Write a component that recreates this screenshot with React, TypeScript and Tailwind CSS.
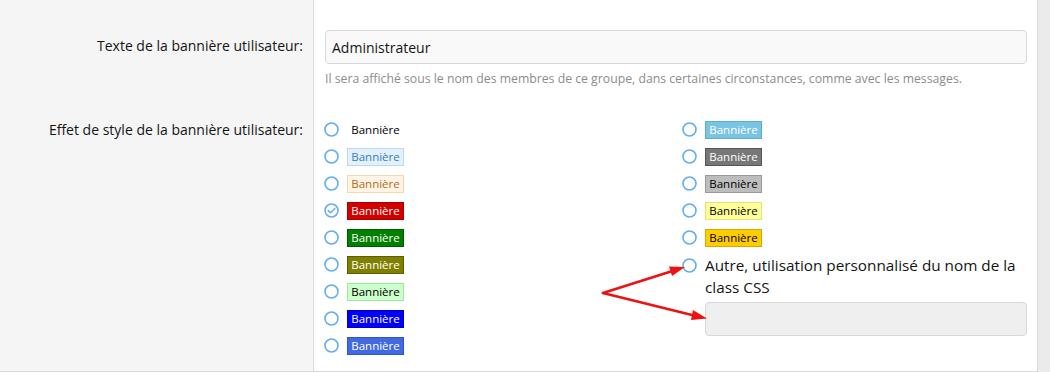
import React from "react";

type B = { bg: string; border: string; text: string };

const leftBadges: (B | null)[] = [
  null,
  { bg: "bg-[#e4f1fc]", border: "border-[#b7daf5]", text: "text-[#2f7fc1]" },
  { bg: "bg-[#fff4e6]", border: "border-[#f6d6aa]", text: "text-[#b06d16]" },
  { bg: "bg-[#d40000]", border: "border-[#a80000]", text: "text-white" },
  { bg: "bg-[#008000]", border: "border-[#005c00]", text: "text-white" },
  { bg: "bg-[#808000]", border: "border-[#5c5c00]", text: "text-white" },
  { bg: "bg-[#ccffcc]", border: "border-[#9be79b]", text: "text-black" },
  { bg: "bg-[#0000ff]", border: "border-[#0000c0]", text: "text-white" },
  { bg: "bg-[#4169e1]", border: "border-[#2f56c9]", text: "text-white" },
];

const rightBadges: B[] = [
  { bg: "bg-[#7ac4e3]", border: "border-[#5aaed2]", text: "text-white" },
  { bg: "bg-[#777777]", border: "border-[#555555]", text: "text-white" },
  { bg: "bg-[#bdbdbd]", border: "border-[#9a9a9a]", text: "text-black" },
  { bg: "bg-[#ffff99]", border: "border-[#e3e37a]", text: "text-black" },
  { bg: "bg-[#ffcc00]", border: "border-[#d6a800]", text: "text-black" },
];

function Radio({ checked = false }: { checked?: boolean }) {
  return (
    <svg width="15" height="15" viewBox="0 0 15 15" className="shrink-0">
      <circle cx="7.5" cy="7.5" r="6.5" fill="white" stroke="#62aef0" strokeWidth="1.6" />
      {checked && (
        <path d="M4.3 7.6 L6.6 9.8 L10.8 5.4" fill="none" stroke="#62aef0" strokeWidth="1.5" strokeLinecap="round" strokeLinejoin="round" />
      )}
    </svg>
  );
}

function Badge({ b }: { b: B | null }) {
  if (!b) {
    return (
      <span className="w-[57px] h-[18px] flex items-center justify-center text-[11.5px] text-black leading-none">
        Bannière
      </span>
    );
  }
  return (
    <span
      className={`w-[57px] h-[18px] flex items-center justify-center border text-[11.5px] leading-none ${b.bg} ${b.border} ${b.text}`}
    >
      Bannière
    </span>
  );
}

export default function App() {
  return (
    <div
      className="relative w-[1050px] h-[372px] flex bg-[#ebebeb] text-[#141414]"
      style={{ fontFamily: '"Open Sans", "Noto Sans", sans-serif' }}
    >
      <div className="w-[1038px] h-[372px] flex flex-col border-b border-r border-[#d9d9d9]">
        {/* Row 1 */}
        <div className="flex h-[116px]">
          <div className="w-[314px] shrink-0 bg-[#f5f5f5] border-r border-[#dedede] pt-[37px] pr-[10px] text-right text-[14px] leading-[18px]">
            Texte de la bannière utilisateur:
          </div>
          <div className="flex-1 bg-white pt-[30px] pl-[11px] pr-[10px]">
            <div className="h-[34px] rounded-[4px] border border-[#d8d8d8] bg-[#f9f9f9] flex items-center px-[6px] text-[14px]">
              Administrateur
            </div>
            <div className="mt-[6px] text-[12.25px] leading-[18px] text-[#8c8c8c]">
              Il sera affiché sous le nom des membres de ce groupe, dans certaines circonstances, comme avec les messages.
            </div>
          </div>
        </div>
        {/* Row 2 */}
        <div className="flex flex-1">
          <div className="w-[314px] shrink-0 bg-[#f5f5f5] border-r border-[#dedede] pt-[5px] pr-[10px] text-right text-[14px] leading-[18px]">
            Effet de style de la bannière utilisateur:
          </div>
          <div className="flex-1 bg-white pl-[10px] pr-[10px] flex">
            <div className="w-[358px] shrink-0 flex flex-col">
              {leftBadges.map((b, i) => (
                <div key={i} className="h-[27px] flex items-center gap-[8px]">
                  <Radio checked={i === 3} />
                  <Badge b={b} />
                </div>
              ))}
            </div>
            <div className="flex-1 flex flex-col">
              {rightBadges.map((b, i) => (
                <div key={i} className="h-[27px] flex items-center gap-[8px]">
                  <Radio />
                  <Badge b={b} />
                </div>
              ))}
              <div className="flex items-start gap-[8px] pt-[3px]">
                <div className="pt-[4px]">
                  <Radio />
                </div>
                <div className="flex-1 flex flex-col">
                  <div className="text-[15.3px] leading-[22px]">
                    Autre, utilisation personnalisé du nom de la<br />class CSS
                  </div>
                  <div className="mt-[4px] h-[34px] rounded-[4px] border border-[#d8d8d8] bg-[#efefef]" />
                </div>
              </div>
            </div>
          </div>
        </div>
      </div>
      <svg className="absolute left-0 top-0 pointer-events-none" width="1050" height="372">
        <g stroke="#ee1111" strokeWidth="2.6" strokeLinecap="round">
          <line x1="603" y1="293" x2="674" y2="270.5" />
          <line x1="603" y1="293" x2="694" y2="315.5" />
        </g>
        <polygon points="685,267 669,266.5 672,276" fill="#ee1111" />
        <polygon points="707,318.5 693,310 691,320" fill="#ee1111" />
      </svg>
    </div>
  );
}
